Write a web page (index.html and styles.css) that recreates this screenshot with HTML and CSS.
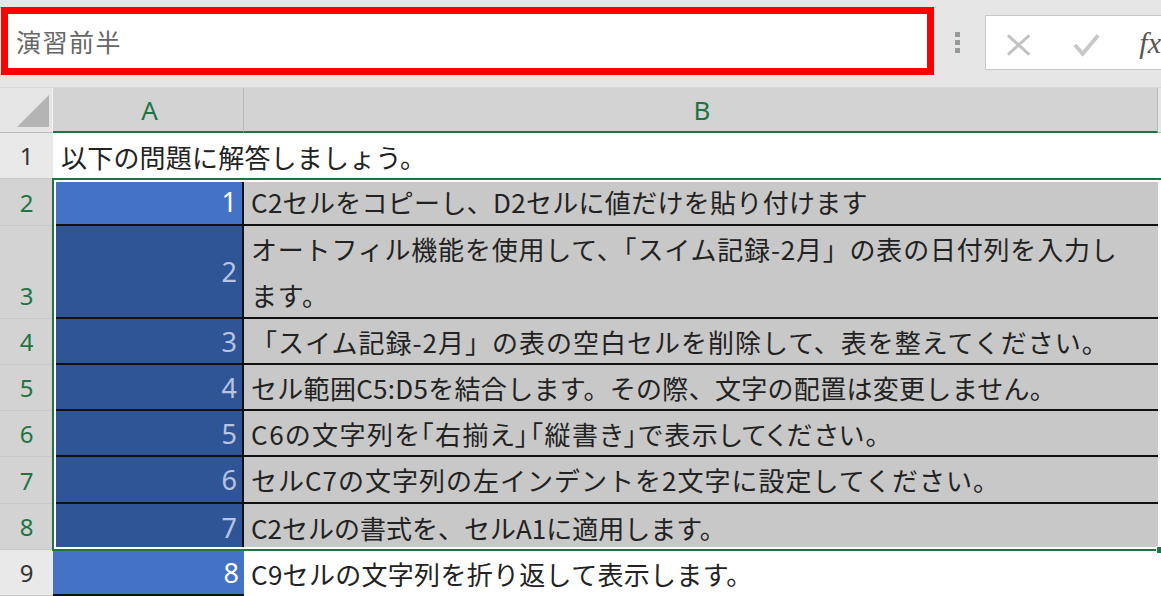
FILE: index.html
```html
<!DOCTYPE html>
<html lang="ja">
<head>
<meta charset="utf-8">
<title>演習前半</title>
<link rel="stylesheet" href="styles.css">
</head>
<body>
<div class="topbar">
  <div class="namebox">演習前半</div>
  <div class="dots"><span></span><span></span><span></span></div>
  <div class="fbar">
    <svg class="ic-x" width="26" height="24" viewBox="0 0 26 24"><path d="M2 2 L24 22 M24 2 L2 22" stroke="#c2c2c2" stroke-width="3" fill="none"/></svg>
    <svg class="ic-ok" width="28" height="24" viewBox="0 0 28 24"><path d="M2 12 L10 21 L26 2" stroke="#c8c8c8" stroke-width="4" fill="none"/></svg>
    <span class="fx">fx</span>
  </div>
</div>
<div class="sheet">
  <div class="corner"><svg width="53" height="45" viewBox="0 0 53 45"><polygon points="17,39 49,39 49,7" fill="#b4b4b4"/></svg></div>
  <div class="colh">A</div>
  <div class="colh">B</div>
  <div class="colh plain"></div>

  <div class="rowh">1</div>
  <div class="title">以下の問題に解答しましょう。</div>
  <div class="c"></div>

  <div class="rowh sel">2</div>
  <div class="a act">1</div>
  <div class="b">C2セルをコピーし、D2セルに値だけを貼り付けます</div>
  <div class="c"></div>

  <div class="rowh sel">3</div>
  <div class="a">2</div>
  <div class="b wrap spaced">オートフィル機能を使用して、「スイム記録-2月」の表の日付列を入力します。</div>
  <div class="c"></div>

  <div class="rowh sel">4</div>
  <div class="a">3</div>
  <div class="b spaced">「スイム記録-2月」の表の空白セルを削除して、表を整えてください。</div>
  <div class="c"></div>

  <div class="rowh sel">5</div>
  <div class="a">4</div>
  <div class="b">セル範囲C5:D5を結合します。その際、文字の配置は変更しません。</div>
  <div class="c"></div>

  <div class="rowh sel">6</div>
  <div class="a">5</div>
  <div class="b prop">C6の文字列を「右揃え」「縦書き」で表示してください。</div>
  <div class="c"></div>

  <div class="rowh sel">7</div>
  <div class="a">6</div>
  <div class="b spaced">セルC7の文字列の左インデントを2文字に設定してください。</div>
  <div class="c"></div>

  <div class="rowh sel">8</div>
  <div class="a last">7</div>
  <div class="b last tight">C2セルの書式を、セルA1に適用します。</div>
  <div class="c"></div>

  <div class="rowh">9</div>
  <div class="a act plainrow">8</div>
  <div class="b white">C9セルの文字列を折り返して表示します。</div>
  <div class="c"></div>

  <div class="selection"></div>
  <div class="handle"></div>
</div>
</body>
</html>
```

FILE: styles.css
```css
html, body {
  margin: 0;
  padding: 0;
}
body {
  width: 1161px;
  height: 596px;
  overflow: hidden;
  background: #ffffff;
  font-family: "Noto Sans CJK JP", "Noto Sans", sans-serif;
  color: #222;
}
.topbar {
  height: 88px;
  box-sizing: border-box;
  background: #e6e6e6;
  border-bottom: 1px solid #d8d8d8;
  display: flex;
  align-items: flex-start;
}
.namebox {
  margin: 7px 0 0 1px;
  width: 933px;
  height: 68px;
  box-sizing: border-box;
  border: 7px solid #ff0000;
  background: #ffffff;
  display: flex;
  align-items: center;
  padding-left: 8px;
  font-size: 25px;
  letter-spacing: 1.5px;
  color: #666;
}
.dots {
  margin: 32px 0 0 21px;
  display: flex;
  flex-direction: column;
  gap: 3px;
}
.dots span {
  width: 5px;
  height: 5px;
  background: #9a9a9a;
}
.fbar {
  margin: 15px 0 0 25px;
  flex: 1;
  height: 55px;
  box-sizing: border-box;
  background: #ffffff;
  border: 1px solid #c8c8c8;
  border-right: none;
  display: flex;
  align-items: center;
  overflow: hidden;
}
.ic-x {
  margin-left: 20px;
  margin-top: 4px;
}
.ic-ok {
  margin-left: 42px;
  margin-top: 4px;
}
.fx {
  margin-left: 39px;
  font-family: "Liberation Serif", serif;
  font-style: italic;
  font-size: 30px;
  color: #555;
  white-space: nowrap;
}
.sheet {
  position: relative;
  display: grid;
  grid-template-columns: 53px 191px 914px 1fr;
  grid-template-rows: 45px 46px 47px 93px 46px 46px 46px 47px 46px 46px;
}
.sheet > div {
  box-sizing: border-box;
}
.corner {
  background: #e6e6e6;
  border-right: 1px solid #f2f2f2;
  border-bottom: 1px solid #bdbdbd;
}
.corner svg {
  display: block;
}
.colh {
  background: #d3d3d3;
  border-right: 1px solid #b8b8b8;
  border-bottom: 2px solid #217346;
  color: #217346;
  font-family: "Noto Sans", sans-serif;
  font-size: 26px;
  display: flex;
  align-items: center;
  justify-content: center;
  padding-left: 3px;
}
.colh.plain {
  background: #e6e6e6;
  border-bottom: 1px solid #bdbdbd;
}
.rowh {
  background: #e9e9e9;
  border-bottom: 1px solid #c9c9c9;
  color: #333;
  font-family: "Noto Sans", sans-serif;
  font-size: 24px;
  line-height: 44px;
  display: flex;
  justify-content: center;
  align-items: flex-end;
}
.rowh.sel {
  background: #d3d3d3;
  color: #217346;
}
.title {
  grid-column: 2 / 4;
  background: #ffffff;
  padding-left: 8px;
  font-size: 26px;
  letter-spacing: 0.2px;
  display: flex;
  align-items: center;
  white-space: nowrap;
}
.a {
  background: #2f5597;
  color: #b7c4e2;
  border-right: 2px solid #111;
  border-bottom: 2px solid #111;
  padding-right: 5px;
  font-family: "Noto Sans", sans-serif;
  font-size: 27px;
  display: flex;
  align-items: center;
  justify-content: flex-end;
}
.a.act {
  background: #4472c4;
  color: #ffffff;
}
.a.last {
  border-bottom: none;
}
.a.plainrow {
  border-right: none;
}
.b {
  background: #c8c8c8;
  color: #222;
  border-bottom: 2px solid #111;
  padding-left: 7px;
  font-size: 26px;
  letter-spacing: 0.3px;
  display: flex;
  align-items: center;
  white-space: nowrap;
}
.b.spaced {
  letter-spacing: 1px;
}
.b.tight {
  letter-spacing: 0;
}
.b.prop {
  font-feature-settings: "palt";
  letter-spacing: 1.6px;
}
.b.wrap {
  white-space: normal;
  align-items: flex-start;
  line-height: 46px;
  padding-right: 14px;
  letter-spacing: 0.8px;
}
.b.last {
  border-bottom: none;
}
.b.white {
  background: #ffffff;
  border-bottom: none;
}
.c {
  background: #ffffff;
}
.selection {
  position: absolute;
  left: 52px;
  top: 90px;
  width: 1120px;
  height: 373px;
  box-sizing: border-box;
  border: 2px solid #217346;
  box-shadow: inset 0 0 0 2px #ffffff;
  pointer-events: none;
}
.handle {
  position: absolute;
  left: 1156px;
  top: 458px;
  width: 8px;
  height: 8px;
  box-sizing: border-box;
  background: #217346;
  border: 1px solid #ffffff;
}
```
